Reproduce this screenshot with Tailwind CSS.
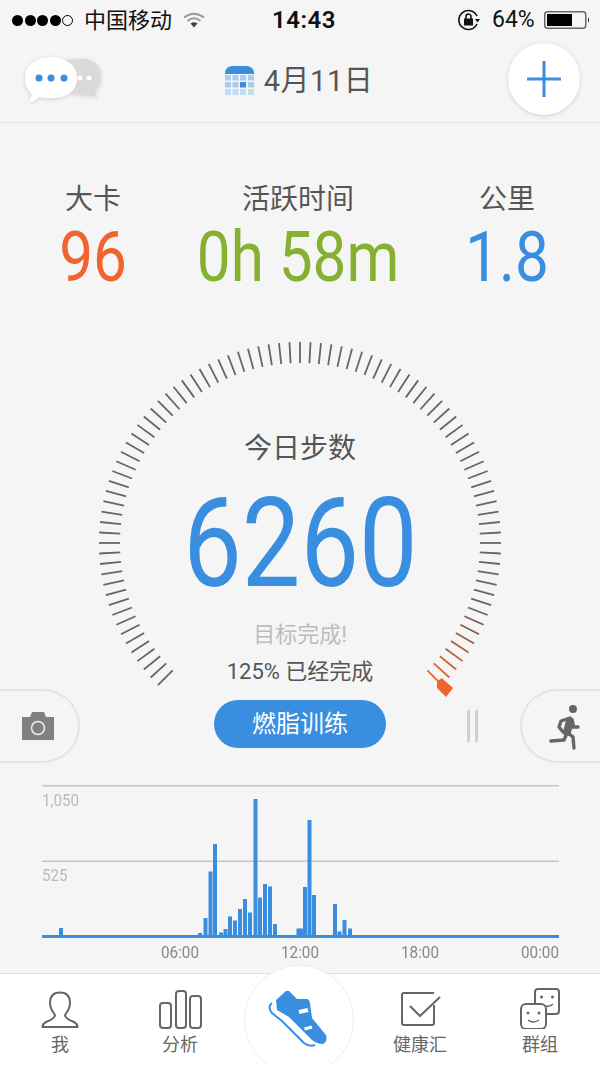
<!DOCTYPE html>
<html lang="zh">
<head>
    <meta charset="UTF-8">
    <meta name="viewport" content="width=device-width, initial-scale=1.0">
    <title>今日步数</title>
    <script src="https://cdn.jsdelivr.net/npm/@tailwindcss/browser@4"></script>
</head>
<body class="bg-[#f5f5f5] font-['Roboto','Noto_Sans_CJK_SC',sans-serif]">
<div class="w-[600px] h-[1065px] overflow-hidden flex flex-col text-[#555]">

    <!-- status bar -->
    <div class="h-10 shrink-0 flex items-center text-[#111] text-[22px] pl-3">
        <div class="flex items-center gap-[1.5px]">
            <span class="w-[11px] h-[11px] rounded-full bg-black"></span>
            <span class="w-[11px] h-[11px] rounded-full bg-black"></span>
            <span class="w-[11px] h-[11px] rounded-full bg-black"></span>
            <span class="w-[11px] h-[11px] rounded-full bg-black"></span>
            <span class="w-[11px] h-[11px] rounded-full border border-black"></span>
        </div>
        <span class="ml-[11px] w-[88px] whitespace-nowrap">中国移动</span>
        <svg class="ml-[11px]" width="22" height="16" viewBox="0 0 22 16" fill="none" stroke="#9a9a9a" stroke-width="2">
            <path d="M1 5.5 Q11 -2 21 5.5"/>
            <path d="M4.5 9 Q11 3.5 17.5 9"/>
            <path d="M11 15.5 L7.5 11.5 Q11 9 14.5 11.5 Z" fill="#444" stroke="none"/>
        </svg>
        <span class="ml-[67px] w-[63px] font-semibold text-[24px] tracking-[.5px] whitespace-nowrap">14:43</span>
        <svg class="ml-[123px]" width="23" height="22" viewBox="0 0 23 22" fill="none" stroke="#111" stroke-width="1.6">
            <path d="M19 15 A9.5 9.5 0 1 1 19 7"/>
            <path d="M17 10 L22 10 L19.5 13.5 Z" fill="#111" stroke="none"/>
            <rect x="6" y="9.5" width="9" height="7" fill="#111" stroke="none"/>
            <path d="M8 10 V7.5 A2.5 2.5 0 0 1 13 7.5 V10"/>
        </svg>
        <span class="ml-[11px] w-[48px] text-[23px] whitespace-nowrap">64%</span>
        <svg class="ml-[4px]" width="46" height="18" viewBox="0 0 46 18">
            <rect x=".75" y=".75" width="41" height="16.5" rx="3" fill="none" stroke="#666" stroke-width="1.5"/>
            <rect x="3" y="3" width="25" height="12" fill="#000"/>
            <path d="M44 6 Q46 9 44 12 Z" fill="#111"/>
        </svg>
    </div>

    <!-- header -->
    <div class="h-[83px] shrink-0 border-b border-[#e2e2e2] relative flex items-center justify-center">
        <svg class="absolute left-[15px] top-[5px] drop-shadow-[0_1px_2px_rgba(0,0,0,.15)]" width="100" height="70" viewBox="0 0 100 70">
            <path d="M68 14 C80 14 86 22 86 31 C86 38 83 44 79 47 Q80 50 83 52 L72 50 L50 48 L50 15 Z" fill="#dadada"/>
            <circle cx="65" cy="33" r="2.5" fill="#fff"/>
            <circle cx="74" cy="33" r="2.5" fill="#fff"/>
            <path d="M36 12 C52 12 62 21 62 33 C62 46 52 53 36 53 C31 53 27 53 24 52 C21 55 18 57 13 57 C16 54 17 51 16 48 C12 44 10 39 10 33 C10 21 21 12 36 12 Z" fill="#fff"/>
            <circle cx="24" cy="33" r="3.5" fill="#3a8edf"/>
            <circle cx="36" cy="33" r="3.5" fill="#3a8edf"/>
            <circle cx="49" cy="33" r="3.5" fill="#3a8edf"/>
        </svg>
        <div class="flex items-center gap-[10px] -ml-[2px]">
            <svg width="29" height="30" viewBox="0 0 29 30">
                <path d="M0 8 Q0 0 8 0 L21 0 Q29 0 29 8 Z" fill="#3a8edf"/>
                <g fill="#a9cdef">
                    <rect x="0" y="9" width="6" height="5.5"/><rect x="7.5" y="9" width="6" height="5.5"/><rect x="15" y="9" width="6" height="5.5"/><rect x="23" y="9" width="6" height="5.5"/>
                    <rect x="0" y="16" width="6" height="5.5"/><rect x="7.5" y="16" width="6" height="5.5"/><rect x="23" y="16" width="6" height="5.5"/>
                </g>
                <rect x="15" y="16" width="6" height="5.5" fill="#3a8edf"/>
                <g fill="#c3dcf4">
                    <rect x="0" y="23" width="6" height="6"/><rect x="7.5" y="23" width="6" height="6"/><rect x="15" y="23" width="6" height="6"/><rect x="23" y="23" width="6" height="6"/>
                </g>
            </svg>
            <span class="text-[29px] leading-none tracking-[.5px] whitespace-nowrap">4月11日</span>
        </div>
        <div class="absolute left-[508px] top-[3px] w-[72px] h-[72px] rounded-full bg-white shadow-[0_1px_4px_rgba(0,0,0,.15)] flex items-center justify-center">
            <svg width="34" height="36" viewBox="0 0 34 36" stroke="#3a8edf" stroke-width="3">
                <path d="M0 18 H34 M17 0 V36"/>
            </svg>
        </div>
    </div>

    <!-- stats -->
    <div class="shrink-0 grid grid-cols-[186px_224px_190px] pt-[62px] text-center">
        <div>
            <div class="text-[28px] leading-[30px]">大卡</div>
            <div class="mt-[7px] flex justify-center text-[70px] leading-[70px] text-[#f1632f] scale-x-[.86]">96</div>
        </div>
        <div>
            <div class="text-[28px] leading-[30px]">活跃时间</div>
            <div class="mt-[7px] flex justify-center text-[70px] leading-[70px] text-[#86b02f] scale-x-[.86] whitespace-nowrap">0h 58m</div>
        </div>
        <div class="pl-1">
            <div class="text-[28px] leading-[30px]">公里</div>
            <div class="mt-[7px] flex justify-center text-[70px] leading-[70px] text-[#3a8edf] scale-x-[.86]">1.8</div>
        </div>
    </div>

    <!-- gauge -->
    <div class="h-[397px] shrink-0 relative flex flex-col items-center pt-[142px]">
        <svg id="gauge" class="absolute left-0 top-0 overflow-visible" width="600" height="397" viewBox="0 0 600 397"></svg>
        <div class="relative text-[28px] leading-[30px]">今日步数</div>
        <div class="relative mt-[25px] text-[124px] leading-[110px] text-[#3a8edf] scale-x-[.84]">6260</div>
        <div class="relative mt-[21px] text-[22px] leading-[30px] text-[#bcbcbc]">目标完成!</div>
        <div class="relative mt-[7px] text-[22px] leading-[30px]">125% 已经完成</div>
    </div>

    <!-- action row -->
    <div class="h-[76px] shrink-0 flex items-start">
        <div class="w-20 h-[74px] shrink-0 rounded-r-[37px] border-2 border-l-0 border-[#e4e4e4] flex items-center pl-[22px]">
            <svg width="32" height="28" viewBox="0 0 32 28">
                <path d="M0 5 H8 L10 0 H22 L24 5 H32 V28 H0 Z" fill="#808080"/>
                <circle cx="16" cy="16" r="6.5" fill="none" stroke="#eee" stroke-width="1.5"/>
            </svg>
        </div>
        <div class="ml-[134px] mt-[11px] w-[172px] h-12 shrink-0 rounded-full bg-[#3a8edf] text-white text-[24px] flex items-center justify-center">燃脂训练</div>
        <div class="ml-[81px] mt-[21px] w-[11px] h-8 shrink-0 border-x-[3px] border-[#d0d0d0]"></div>
        <div class="ml-[42px] w-20 h-[74px] shrink-0 rounded-l-[37px] border-2 border-r-0 border-[#e4e4e4] flex items-center pl-[15px]">
            <svg width="60" height="60" viewBox="0 0 60 60" fill="none" stroke="#666" stroke-width="3.4" stroke-linecap="round" stroke-linejoin="round">
                <circle cx="36" cy="13" r="4" fill="#666" stroke="none"/>
                <path d="M33 25 L30 36" stroke-width="8"/>
                <path d="M33 22 L24 25 L22 31 L26 36"/>
                <path d="M36 27 L36 31 L41 31"/>
                <path d="M30 37 L27 44 L14 45"/>
                <path d="M31 37 L36 41 L37 52"/>
            </svg>
        </div>
    </div>

    <!-- steps chart -->
    <div class="h-[188px] shrink-0 mt-5 relative">
        <svg id="chart" class="block" width="600" height="155" viewBox="0 785 600 155"></svg>
        <span class="absolute left-[42px] top-[6px] text-[16px] leading-5 text-[#bbb] scale-x-[.95] origin-left">1,050</span>
        <span class="absolute left-[42px] top-[81px] text-[16px] leading-5 text-[#bbb] scale-x-[.95] origin-left">525</span>
        <div class="grid grid-cols-[120px_120px_120px_120px] pl-[120px] text-[#888] text-[16px] leading-5 text-center mt-[3px]">
            <span class="scale-x-[.95]">06:00</span>
            <span class="scale-x-[.95]">12:00</span>
            <span class="scale-x-[.95]">18:00</span>
            <span class="scale-x-[.95]">00:00</span>
        </div>
    </div>

    <!-- tab bar -->
    <div class="h-[92px] shrink-0 bg-white border-t border-[#ddd] relative grid grid-cols-5 text-[#666] text-[18px] text-center">
        <div class="flex flex-col items-center pt-[16px]">
            <svg width="40" height="39" viewBox="0 0 40 39" fill="none" stroke="#666" stroke-width="2">
                <path d="M20 2.5 C13 2.5 10 7 10 13 C10 19 13 22 15 25 C15 28 11 30 6 32 C3 33.5 2.5 35 2.5 37 L37.5 37 C37.5 35 37 33.5 34 32 C29 30 25 28 25 25 C27 22 30 19 30 13 C30 7 27 2.5 20 2.5 Z"/>
            </svg>
            <span class="leading-6 mt-[4px]">我</span>
        </div>
        <div class="flex flex-col items-center pt-[16px]">
            <svg class="ml-[2px]" width="44" height="39" viewBox="0 0 44 39" fill="none" stroke="#666" stroke-width="2">
                <rect x="1" y="13" width="11" height="25" rx="3"/>
                <rect x="17" y="1" width="10" height="37" rx="3"/>
                <rect x="31" y="6" width="11" height="32" rx="3"/>
            </svg>
            <span class="leading-6 mt-[4px]">分析</span>
        </div>
        <div></div>
        <div class="flex flex-col items-center pt-[16px]">
            <svg width="44" height="39" viewBox="0 0 44 39" fill="none" stroke="#666" stroke-width="2">
                <path d="M36 3 H6 Q4 3 4 5 V33 Q4 35 6 35 H34 Q36 35 36 33 V15"/>
                <path d="M12 16 L22 26 L42 7"/>
            </svg>
            <span class="leading-6 mt-[4px]">健康汇</span>
        </div>
        <div class="flex flex-col items-center pt-[13px]">
            <svg width="42" height="42" viewBox="0 0 42 42" fill="none" stroke="#666" stroke-width="2">
                <path d="M16 16 V5 Q16 2 19 2 H37 Q40 2 40 5 V24 Q40 27 37 27 H27"/>
                <rect x="2" y="17" width="25" height="25" rx="5"/>
                <circle cx="22.5" cy="10" r="1.5" fill="#666" stroke="none"/><circle cx="33.5" cy="10" r="1.5" fill="#666" stroke="none"/>
                <path d="M27 19 Q31 20 34 17" stroke-width="1.5"/>
                <circle cx="9" cy="26" r="1.5" fill="#666" stroke="none"/><circle cx="20" cy="26" r="1.5" fill="#666" stroke="none"/>
                <path d="M9 33 Q14 37 20 33" stroke-width="1.5"/>
            </svg>
            <span class="leading-6 mt-[4px]">群组</span>
        </div>
        <div class="absolute left-[244px] top-[-9px] w-[110px] h-[110px] rounded-full bg-white border border-[#eee] flex items-start justify-center">
            <svg class="mt-[9px] ml-[-1px]" width="100" height="75" viewBox="0 0 100 75">
                <path d="M27 25 L37 16 Q40 15 42 18 L48 24 L58 24 Q60 24 61 28 L63 43 L77 60 Q79 66 74 69 Q68 69 63 65 L40 42 L28 35 Z" fill="#3a8edf"/>
                <path d="M23 28 Q18 32 23 38 L33 46 L55 68 Q60 72 66 70" fill="none" stroke="#3a8edf" stroke-width="2"/>
                <path d="M50 37 L59 35" stroke="#fff" stroke-width="4"/>
                <path d="M55.5 54 L63 52" stroke="#fff" stroke-width="3"/>
            </svg>
        </div>
    </div>
</div>

<script>
    const svgNs = 'http://www.w3.org/2000/svg';

    const addEl = (parent, tag, attrs) => {
        const el = document.createElementNS(svgNs, tag);
        Object.keys(attrs).forEach((k) => el.setAttribute(k, attrs[k]));
        parent.appendChild(el);
    };

    // gauge ticks, 3 degrees apart, going clockwise from bottom left
    const gauge = document.getElementById('gauge');
    const warm = ['#7a5c50', '#8a5d4a', '#9a5f44', '#ab613e', '#bd6238', '#d06233', '#e4622f', '#f1632f'];
    for (let i = 0; i <= 90; i++) {
        const a = (225 - i * 3) * Math.PI / 180;
        const c = Math.cos(a), s = Math.sin(a);
        const left = 90 - i;
        addEl(gauge, 'line', {
            x1: 300 + 180 * c, y1: 251 - 180 * s,
            x2: 300 + 201 * c, y2: 251 - 201 * s,
            stroke: left < warm.length ? warm[warm.length - 1 - left] : '#666',
            'stroke-width': 1.8
        });
    }
    addEl(gauge, 'path', { d: 'M441.7 386 L453 396 L446 405 L437 396 L437 390 Z', fill: '#f1632f' });

    // hourly steps, x centre and top of each bar in page pixels
    const bars = [[61,928],[200,933],[205.5,918],[210.5,871.5],[215,844],[221,932.5],[225.5,929],[230,916.5],[235,920.5],
        [240,909],[245,899],[250,912.5],[255.5,799],[260,897.5],[265,884],[270,886.5],[275,924],[298.5,928.5],[301,928.5],
        [305,887],[309.5,820],[314,895],[335,904],[339.5,931.5],[344.5,920],[350,928.5]];
    const chart = document.getElementById('chart');
    addEl(chart, 'rect', { x: 42, y: 785, width: 517, height: 1.5, fill: '#c6c6c6' });
    addEl(chart, 'rect', { x: 42, y: 860.5, width: 517, height: 1.5, fill: '#c6c6c6' });
    bars.forEach(([x, top]) => {
        addEl(chart, 'rect', { x: x - 2, y: top, width: 4, height: 937 - top, fill: '#3a8edf' });
    });
    addEl(chart, 'rect', { x: 42, y: 935, width: 517, height: 3, fill: '#3a8edf' });
</script>
</body>
</html>
